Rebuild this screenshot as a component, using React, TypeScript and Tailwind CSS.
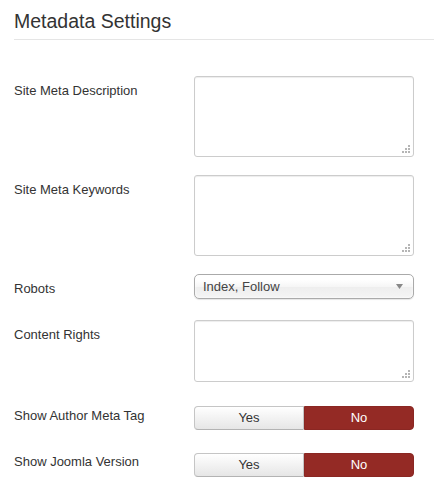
import React from "react";

function Grip() {
  const dots = [
    [6, 0],
    [3, 3],
    [6, 3],
    [0, 6],
    [3, 6],
    [6, 6],
  ];
  return (
    <div className="absolute right-[3px] bottom-[3px] w-[8px] h-[8px]">
      {dots.map(([x, y], i) => (
        <span
          key={i}
          className="absolute w-[2px] h-[2px] bg-[#b5b5b5]"
          style={{ left: x, top: y }}
        />
      ))}
    </div>
  );
}

function TextArea({ h }: { h: string }) {
  return (
    <div
      className={`relative w-[220px] ${h} border border-[#cccccc] rounded-[3px] bg-white shadow-[inset_0_1px_1px_rgba(0,0,0,0.075)]`}
    >
      <Grip />
    </div>
  );
}

function Toggle() {
  return (
    <div className="flex w-[220px] h-[24px] text-[13px]">
      <div className="flex-1 flex items-center justify-center rounded-l-[4px] border border-[#c5c5c5] border-b-[#b3b3b3] bg-gradient-to-b from-white to-[#e6e6e6] text-[#333]">
        Yes
      </div>
      <div className="flex-1 flex items-center justify-center rounded-r-[4px] border border-[#8a2723] bg-[#942a25] text-white">
        No
      </div>
    </div>
  );
}

function Row({
  label,
  mt,
  pt,
  children,
}: {
  label: string;
  mt: string;
  pt: string;
  children: React.ReactNode;
}) {
  return (
    <div className={`flex items-start ${mt}`}>
      <div className={`w-[180px] ${pt} text-[13px] leading-[18px] text-[#333]`}>{label}</div>
      {children}
    </div>
  );
}

export default function App() {
  return (
    <div
      className="w-[434px] h-[490px] bg-white pl-[14px] overflow-hidden"
      style={{ fontFamily: '"Liberation Sans", Arial, sans-serif' }}
    >
      <div className="pt-[9px] border-b border-[#e5e5e5] pb-[6px]">
        <h3 className="text-[19.5px] leading-[24px] text-[#333] font-normal">Metadata Settings</h3>
      </div>

      <Row label="Site Meta Description" mt="mt-[36px]" pt="pt-[6px]">
        <TextArea h="h-[81px]" />
      </Row>
      <Row label="Site Meta Keywords" mt="mt-[18px]" pt="pt-[6px]">
        <TextArea h="h-[81px]" />
      </Row>
      <Row label="Robots" mt="mt-[18px]" pt="pt-[6px]">
        <div className="relative w-[220px] h-[25px] rounded-[5px] border border-[#aaaaaa] bg-[linear-gradient(#ffffff_20%,#f6f6f6_50%,#eeeeee_52%,#f4f4f4_100%)] shadow-[inset_0_0_3px_#fff,0_1px_1px_rgba(0,0,0,0.1)] flex items-center pl-[8px] text-[13px] text-[#444]">
          Index, Follow
          <svg
            className="absolute right-[10px] top-[9px]"
            width="7"
            height="5"
            viewBox="0 0 7 5"
          >
            <polygon points="0,0 7,0 3.5,5" fill="#888" />
          </svg>
        </div>
      </Row>
      <Row label="Content Rights" mt="mt-[21px]" pt="pt-[6px]">
        <TextArea h="h-[62px]" />
      </Row>
      <Row label="Show Author Meta Tag" mt="mt-[24px]" pt="pt-[1px]">
        <Toggle />
      </Row>
      <Row label="Show Joomla Version" mt="mt-[23px]" pt="pt-[0px]">
        <Toggle />
      </Row>
    </div>
  );
}
